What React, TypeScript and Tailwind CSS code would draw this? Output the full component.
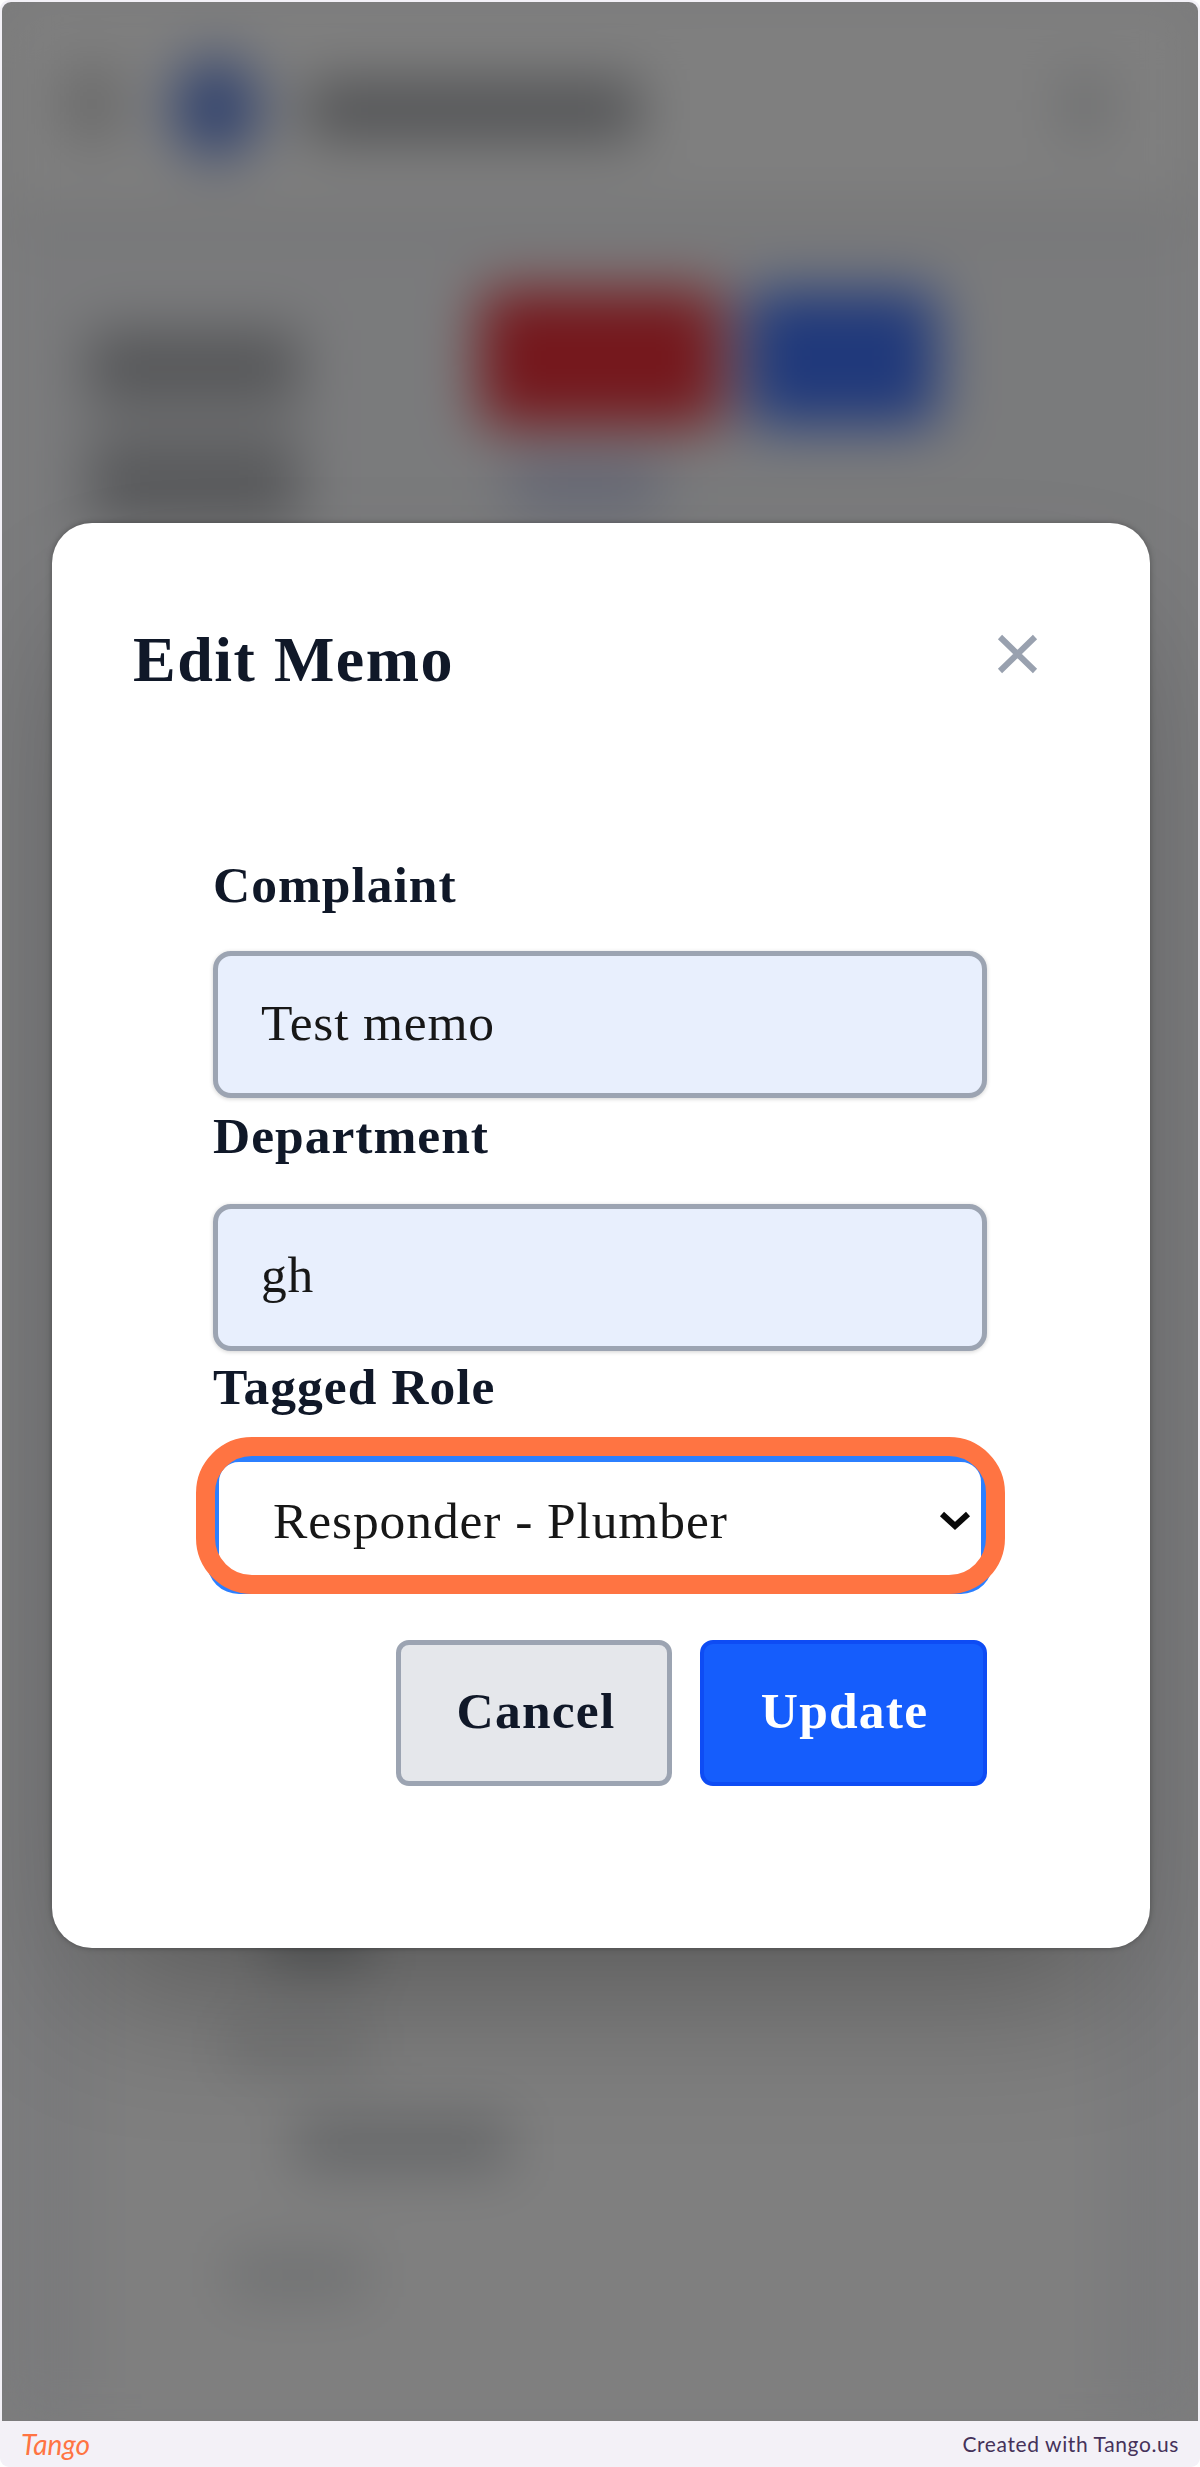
import React from "react";

const labelClass =
  "block h-[60px] whitespace-nowrap text-[51.5px] leading-[60px] font-bold tracking-[1px] text-[#101828]";
const inputClass =
  "flex w-full items-center rounded-[18px] border-[5px] border-[#9ca4b2] bg-[#e8effd] pl-[43px] text-[51.5px] leading-[60px] text-[#171717] shadow-[0_1px_4px_rgba(0,0,0,0.18)]";

function AppBackground() {
  return (
    <div className="flex h-full flex-col bg-[#f5f6f9] blur-[28px]">
      <div className="flex h-[208px] shrink-0 items-start bg-white pt-[66px] shadow-[0_4px_24px_rgba(0,0,0,0.2)]">
        <div className="ml-[66px] h-[72px] w-[48px] bg-[#c8c8c8]" />
        <div className="-mt-[10px] ml-[56px] h-[100px] w-[88px] rounded-[44px] bg-[#6486dc]" />
        <div className="mt-[12px] ml-[46px] h-[60px] w-[334px] bg-[#a4a6aa]" />
        <div className="mt-[6px] ml-[422px] h-[64px] w-[46px] bg-[#dadcde]" />
      </div>
      <div className="flex h-[330px] shrink-0 items-start pt-[80px] pl-[86px]">
        <div className="flex w-[212px] flex-col gap-[30px] pt-[40px]">
          <div className="h-[76px] bg-[#acaeb2]" />
          <div className="h-[90px] bg-[#b2b4b8]" />
        </div>
        <div className="ml-[180px] flex flex-col gap-[34px]">
          <div className="flex gap-[24px]">
            <div className="h-[136px] w-[242px] rounded-[16px] bg-[#ea2f39]" />
            <div className="h-[136px] w-[192px] rounded-[16px] bg-[#4072f6]" />
          </div>
          <div className="ml-[30px] h-[50px] w-[150px] bg-[#c6cbe8]" />
        </div>
      </div>
      <div className="mx-[96px] flex flex-1 flex-col bg-white pt-[1370px]">
        <div className="ml-[168px] h-[60px] w-[104px] bg-[#c2c6c8]" />
        <div className="mt-[54px] ml-[130px] h-[46px] w-[140px] bg-[#e2e4e5]" />
        <div className="mt-[46px] ml-[196px] h-[56px] w-[216px] bg-[#cccfd2]" />
        <div className="mt-[78px] ml-[130px] h-[50px] w-[140px] bg-[#e0e3e5]" />
      </div>
    </div>
  );
}

function EditMemoDialog() {
  return (
    <div
      role="dialog"
      className="absolute top-[521px] left-[50px] h-[1425px] w-[1098px] rounded-[40px] bg-white shadow-[0_75px_150px_-36px_rgba(0,0,0,0.3),0_0_6px_rgba(0,0,0,0.3)]"
    >
      <div className="flex items-start justify-between pt-[95px] pr-[111px] pl-[81px]">
        <h2 className="h-[84px] text-[64px] leading-[84px] font-bold tracking-[1.5px] text-[#101828]">
          Edit Memo
        </h2>
        <button aria-label="Close" className="mt-[16px]">
          <svg width="43" height="40" viewBox="0 0 43 40" fill="none">
            <path d="M4 3 39 37M39 3 4 37" stroke="#99a1af" strokeWidth="6" />
          </svg>
        </button>
      </div>
      <form className="mt-[153px] ml-[161px] w-[774px]">
        <label className={labelClass}>Complaint</label>
        <div className={inputClass + " mt-[36px] h-[147px] pb-[3px] tracking-[0.8px]"}>
          Test memo
        </div>
        <label className={labelClass + " mt-[8px]"}>Department</label>
        <div className={inputClass + " mt-[38px] h-[147px] pb-[5px] tracking-[0.8px]"}>gh</div>
        <label className={labelClass + " mt-[6px]"}>Tagged Role</label>
        <div className="relative mt-[39px] flex h-[132px] items-center justify-between rounded-[26px] border-[6px] border-[#2b7fff] bg-white pr-[10px] pb-[2px] pl-[54px] shadow-[0_0_0_6px_#2b7fff]">
          <span className="text-[51.5px] leading-[60px] tracking-[0.9px] whitespace-nowrap text-[#171717]">
            Responder - Plumber
          </span>
          <svg width="32" height="22" viewBox="0 0 32 22" fill="none">
            <path d="M3 4 16 16 29 4" stroke="#0a0a0a" strokeWidth="6" />
          </svg>
          <span className="pointer-events-none absolute -top-[25px] -left-[23px] h-[157px] w-[809px] rounded-[56px] border-[19px] border-[#ff7442]" />
        </div>
        <div className="mt-[52px] flex justify-end gap-[28px] text-[51.5px] leading-[60px] font-bold tracking-[1.2px]">
          <button
            type="button"
            className="h-[146px] w-[276px] rounded-[13px] border-[5px] border-[#9ca4b2] bg-[#e5e7eb] pb-[5px] pl-[4px] text-[#101828]"
          >
            Cancel
          </button>
          <button
            type="button"
            className="h-[146px] w-[287px] rounded-[13px] border-[4px] border-[#0e4cf4] bg-[#155dfc] pb-[5px] pl-[2px] text-white"
          >
            Update
          </button>
        </div>
      </form>
    </div>
  );
}

export default function App() {
  return (
    <div className="h-[2467px] w-[1200px] bg-white">
      <div className="flex h-full flex-col rounded-[9px] bg-[#f3f1f7] px-[2px] pt-[2px] font-['Liberation_Serif',serif]">
        <main className="relative h-[2419px] shrink-0 overflow-hidden rounded-t-[9px] bg-[#fafafb]">
          <AppBackground />
          <div className="absolute inset-0 bg-black/50" />
          <EditMemoDialog />
        </main>
        <footer className="flex flex-1 items-center justify-between pr-[19px] pl-[19px]">
          <span className="font-['Lato',sans-serif] text-[28px] leading-[40px] text-[#ff7442] italic">
            Tango
          </span>
          <span className="font-['Lato',sans-serif] text-[21px] leading-[40px] tracking-[0.6px] whitespace-nowrap text-[#45325a]">
            Created with Tango.us
          </span>
        </footer>
      </div>
    </div>
  );
}
